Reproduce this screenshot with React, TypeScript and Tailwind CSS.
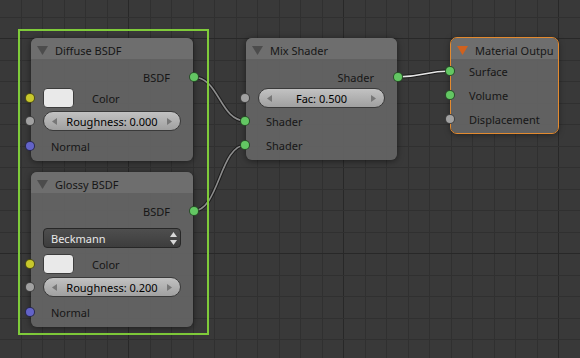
import React from 'react';

// canvas grid: minor every 21.5px, major every 10 lines
const vLines = Array.from({ length: 27 }, (_, k) => ({ x: Math.round(20.8 + 21.5 * k) + 0.5, major: k % 10 === 5 }));
const hLines = Array.from({ length: 17 }, (_, j) => ({ y: Math.round(16.5 + 21.5 * j) + 0.5, major: j % 10 === 1 }));

const wires = [
  { d: 'M193 77 C219.5 77 219.5 121 246 121', hot: false },
  { d: 'M193 211 C219.5 211 219.5 145 246 145', hot: false },
  { d: 'M397 77 C424 77 424 71 451 71', hot: true },
];

function Socket({ color, side }: { color: string; side: 'left' | 'right' }) {
  return (
    <span
      className={`absolute top-1/2 -translate-y-1/2 w-[10px] h-[10px] rounded-full border border-black/60 ${color} ${
        side === 'left' ? 'left-[-6px]' : 'right-[-6px]'
      }`}
    />
  );
}

function Header({ title, active }: { title: string; active?: boolean }) {
  return (
    <div className="h-[21px] pt-[3px] pl-[6px] flex items-center rounded-t-[6px] bg-[#707070]/90 overflow-hidden whitespace-nowrap">
      <svg width="11" height="9" viewBox="0 0 11 9" className="shrink-0">
        <polygon points="0,0 11,0 5.5,9" fill={active ? '#d0611e' : '#4c4c4c'} />
      </svg>
      <span className="ml-[7px]">{title}</span>
    </div>
  );
}

function Output({ label }: { label: string }) {
  return (
    <div className="relative h-[20px] mt-[8px] flex items-center justify-end pr-[23px]">
      <span>{label}</span>
      <Socket color="bg-[#63c763]" side="right" />
    </div>
  );
}

function Input({ label, color, mt }: { label: string; color: string; mt: string }) {
  return (
    <div className={`relative h-[20px] flex items-center pl-[20px] ${mt}`}>
      <span>{label}</span>
      <Socket color={color} side="left" />
    </div>
  );
}

function ColorRow({ mt }: { mt: string }) {
  return (
    <div className={`relative h-[20px] flex items-center pl-[12px] ${mt}`}>
      <div className="w-[31px] h-[20px] rounded-[4px] bg-[#e9e9e9] border border-[#3c3c3c]" />
      <span className="ml-[18px]">Color</span>
      <Socket color="bg-[#c8c82c]" side="left" />
    </div>
  );
}

function Slider({ label, mt }: { label: string; mt: string }) {
  return (
    <div className={`relative h-[20px] ${mt}`}>
      <div className="relative mx-[12px] h-[20px] rounded-full border border-[#3a3a3a] bg-gradient-to-b from-[#c2c2c2] to-[#a0a0a0] flex items-center justify-center text-black">
        <svg width="5" height="7" viewBox="0 0 5 7" className="absolute left-[8px]">
          <polygon points="5,0 5,7 0,3.5" fill="#777777" />
        </svg>
        <span>{label}</span>
        <svg width="5" height="7" viewBox="0 0 5 7" className="absolute right-[8px]">
          <polygon points="0,0 0,7 5,3.5" fill="#777777" />
        </svg>
      </div>
      <Socket color="bg-[#a1a1a1]" side="left" />
    </div>
  );
}

function Dropdown({ label }: { label: string }) {
  return (
    <div className="mx-[12px] mt-[7px] h-[20px] rounded-[4px] border border-[#272727] bg-gradient-to-b from-[#4e4e4e] to-[#3d3d3d] flex items-center pl-[7px] text-[#e8e8e8]">
      <span className="flex-1">{label}</span>
      <svg width="7" height="13" viewBox="0 0 7 13" className="mr-[3px]">
        <polygon points="3.5,0 7,5 0,5" fill="#d8d8d8" />
        <polygon points="0,8 7,8 3.5,13" fill="#d8d8d8" />
      </svg>
    </div>
  );
}

function Node({ pos, children, active }: { pos: string; children: React.ReactNode; active?: boolean }) {
  return (
    <div
      className={`absolute ${pos} rounded-[6px] bg-[#666666]/90 shadow-[0_1px_6px_rgba(0,0,0,0.5)] ${
        active ? 'outline outline-[1.5px] outline-[#e38a2f]' : ''
      }`}
    >
      {children}
    </div>
  );
}

export default function App() {
  return (
    <div className="relative w-[580px] h-[358px] overflow-hidden bg-[#393939] text-[11px] leading-none font-['Noto_Sans','Open_Sans',sans-serif] text-[#161616]">
      <svg width="580" height="358" className="absolute inset-0">
        {vLines.map((l) => (
          <line key={'v' + l.x} x1={l.x} y1="0" x2={l.x} y2="358" stroke={l.major ? '#282828' : '#303030'} />
        ))}
        {hLines.map((l) => (
          <line key={'h' + l.y} x1="0" y1={l.y} x2="580" y2={l.y} stroke={l.major ? '#282828' : '#303030'} />
        ))}
        {wires.map((w) => (
          <g key={w.d} fill="none">
            <path d={w.d} stroke="#1c1c1c" strokeWidth="3.6" />
            <path d={w.d} stroke={w.hot ? '#e6e6e6' : '#8c8c8c'} strokeWidth="1.6" />
          </g>
        ))}
      </svg>

      {/* frame round the two BSDF nodes */}
      <div className="absolute left-[18px] top-[29px] w-[191px] h-[306px] border-2 border-[#7fcb3a]" />

      <Node pos="left-[31px] top-[38px] w-[162px] h-[123px]">
        <Header title="Diffuse BSDF" />
        <Output label="BSDF" />
        <ColorRow mt="mt-[1px]" />
        <Slider label="Roughness: 0.000" mt="mt-[3px]" />
        <Input label="Normal" color="bg-[#6363c8]" mt="mt-[5px]" />
      </Node>

      <Node pos="left-[31px] top-[172px] w-[162px] h-[155px]">
        <Header title="Glossy BSDF" />
        <Output label="BSDF" />
        <Dropdown label="Beckmann" />
        <ColorRow mt="mt-[6px]" />
        <Slider label="Roughness: 0.200" mt="mt-[3px]" />
        <Input label="Normal" color="bg-[#6363c8]" mt="mt-[5px]" />
      </Node>

      <Node pos="left-[246px] top-[38px] w-[151px] h-[122px]">
        <Header title="Mix Shader" />
        <Output label="Shader" />
        <Slider label="Fac: 0.500" mt="mt-[1px]" />
        <Input label="Shader" color="bg-[#63c763]" mt="mt-[3px]" />
        <Input label="Shader" color="bg-[#63c763]" mt="mt-[4px]" />
      </Node>

      <Node pos="left-[451px] top-[38px] w-[107px] h-[95px]" active>
        <Header title="Material Outpu" active />
        <div className="relative h-[24px] flex items-center pl-[18px]">
          <span>Surface</span>
          <Socket color="bg-[#63c763]" side="left" />
        </div>
        <div className="relative h-[24px] flex items-center pl-[18px]">
          <span>Volume</span>
          <Socket color="bg-[#63c763]" side="left" />
        </div>
        <div className="relative h-[24px] flex items-center pl-[18px]">
          <span>Displacement</span>
          <Socket color="bg-[#a1a1a1]" side="left" />
        </div>
      </Node>
    </div>
  );
}
